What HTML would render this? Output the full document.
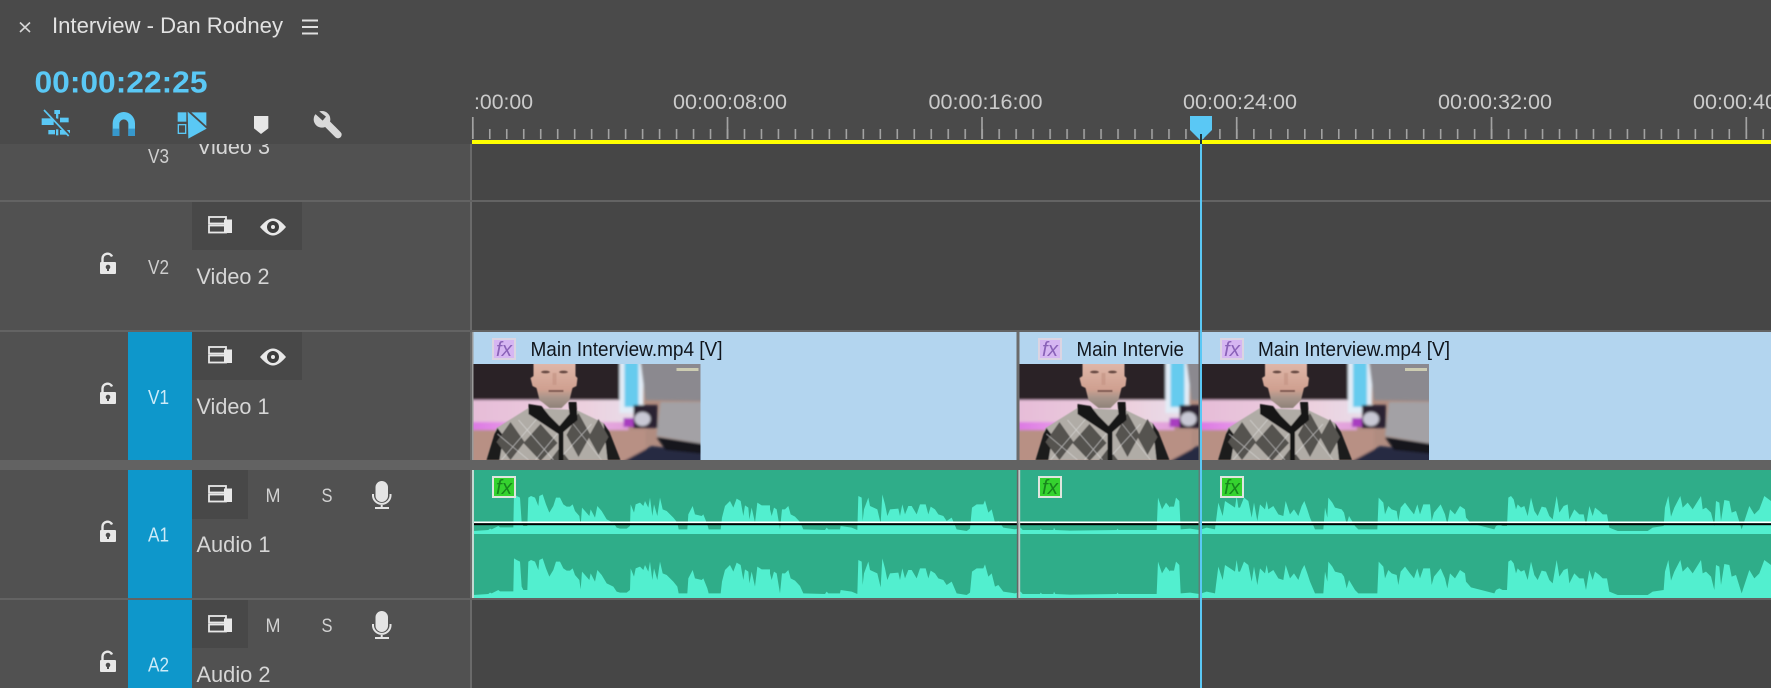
<!DOCTYPE html>
<html><head><meta charset="utf-8"><style>
html,body{margin:0;padding:0;background:#464646;overflow:hidden}
svg{display:block}
text{font-family:"Liberation Sans",sans-serif}
.t{font-size:22px;fill:#d6d6d6}
.r{font-size:21px;fill:#cbcbcb}
.c{font-size:20px;fill:#10151c}
.fxp{font-family:"Liberation Sans",sans-serif;font-style:italic;font-size:20px;fill:#8a62b8}
.fxg{font-family:"Liberation Sans",sans-serif;font-style:italic;font-size:20px;fill:#17851c}
</style></head><body>
<svg xmlns="http://www.w3.org/2000/svg" width="1771" height="688" viewBox="0 0 1771 688">
<defs>
<pattern id="tk" x="472" y="129" width="16.98" height="10" patternUnits="userSpaceOnUse"><rect x="0" y="0" width="1.6" height="10" fill="#a2a2a2"/></pattern>
<filter id="b1"><feGaussianBlur stdDeviation="1.2"/></filter>
<filter id="b2"><feGaussianBlur stdDeviation=".55"/></filter>
<filter id="b3"><feGaussianBlur stdDeviation="1.6"/></filter>
<clipPath id="c1"><rect x="0" y="0" width="227" height="96"/></clipPath>
<clipPath id="c2"><rect x="0" y="0" width="179" height="96"/></clipPath>
<linearGradient id="pink" x1="0" x2="1" y1="0" y2="0"><stop offset="0" stop-color="#e6bcd8"/><stop offset=".7" stop-color="#ecd0de"/><stop offset="1" stop-color="#e8dce8"/></linearGradient>
<linearGradient id="mag" x1="0" x2="1" y1="0" y2="0"><stop offset="0" stop-color="#dc78e2"/><stop offset=".5" stop-color="#f0b4ee"/><stop offset="1" stop-color="#e0a0d8"/></linearGradient>
<linearGradient id="skin" x1="0" x2="0" y1="0" y2="1"><stop offset="0" stop-color="#e0b8aa"/><stop offset=".6" stop-color="#cfa090"/><stop offset=".78" stop-color="#a8948a"/><stop offset="1" stop-color="#8e8278"/></linearGradient>

<g id="bg">
 <rect width="227" height="96" fill="#b08c80"/>
 <g filter="url(#b1)">
  <rect x="-3" y="-3" width="150" height="39" fill="#2c2428"/>
  <rect x="-3" y="36" width="163" height="26" fill="url(#pink)"/>
  <rect x="-3" y="58" width="158" height="8" fill="url(#mag)"/>
  <rect x="-3" y="66" width="175" height="33" fill="#b89084"/>
  <rect x="146" y="-3" width="24" height="52" fill="#e2ecf6"/>
  <rect x="151" y="-3" width="14" height="46" fill="#66cbee"/>
  <polygon points="167,-3 230,-3 230,37 172,36" fill="#8b898f"/>
  <polygon points="187,38 230,38 230,80 183,72" fill="#a3a1a5"/>
  <rect x="160" y="41" width="24" height="23" fill="#2b2430"/>
  <ellipse cx="169" cy="55" rx="8" ry="7" fill="#c8c8d4"/>
  <rect x="150" y="54" width="10" height="9" fill="#a83ec0"/>
  <polygon points="147,99 178,82 230,88 230,99" fill="#282a42"/>
  <polygon points="183,73 230,80 230,90 192,86" fill="#17171d"/>
 </g>
 <rect x="203" y="4" width="22" height="3" fill="#d8d8b8" opacity=".85"/>
</g>

<g id="man" filter="url(#b2)">
 <polygon points="13,96 23,64 55,44 103,46 130,59 147,96" fill="#b0aca6"/>
 <polygon points="13,96 21,70 24,64 30,72 26,96" fill="#1c1a1c"/>
 <polygon points="130,59 136,68 147,96 134,96" fill="#1b1a1c"/>
 <g fill="#55524f">
  <polygon points="37,58 51,78 37,96 23,78"/>
  <polygon points="67,60 84,79 67,97 50,79"/>
  <polygon points="105,49 117,71 105,93 93,71"/>
  <polygon points="125,55 135,73 125,91 115,73"/>
  <polygon points="86,84 96,97 76,97"/>
 </g>
 <g stroke="#e2e2e2" stroke-width=".6" fill="none" opacity=".75">
  <path d="M24,70L55,96M45,56L80,96M62,96L100,50M28,96L64,54M85,96L118,60M95,54L128,96"/>
 </g>
 <polygon points="55,40 68,42 76,52 86,62 96,50 95,38 103,38 104,56 90,68 90,97 85,97 85,70 70,60 55,50" fill="#151315"/>
 <path d="M60,-2 H102 V12 L104,14 L103,22 L99,24 L96,36 L88,44 L76,44 L66,36 L63,24 L59,22 L57,14 L60,12 Z" fill="url(#skin)"/>
 <ellipse cx="72" cy="8" rx="4.5" ry="1.5" fill="#6a4c44"/>
 <ellipse cx="90" cy="8" rx="4.5" ry="1.5" fill="#6a4c44"/>
 <rect x="79" y="9" width="4" height="12" fill="#c49484" opacity=".7"/>
 <rect x="75" y="26" width="15" height="2" fill="#7d5650"/>
</g>

<g id="wave" fill="#52efcf">
 <polygon transform="translate(470,510) scale(.33333)" points="10,264 10,255 55,252 60,248 65,250 85,240 90,244 130,244 132,145 140,150 150,155 155,230 160,240 172,240 175,155 183,150 195,155 205,180 208,150 218,145 228,175 238,200 250,180 258,155 270,155 280,175 290,182 300,182 308,175 315,195 328,210 332,238 336,185 345,195 358,210 362,190 375,215 382,180 395,195 410,220 430,230 440,245 450,248 470,248 480,240 482,175 492,200 497,175 510,170 520,180 525,165 535,185 540,155 547,210 552,175 562,210 570,155 578,190 590,195 610,215 622,230 626,250 652,250 655,205 668,180 675,205 695,210 700,205 712,235 716,250 752,250 756,215 765,180 780,165 790,185 800,158 812,165 820,210 825,178 835,185 838,220 845,185 855,230 862,170 875,178 900,178 900,264"/>
 <polygon transform="translate(770,510) scale(.33333)" points="0,264 0,190 5,210 12,185 20,190 30,250 36,190 45,190 55,180 62,205 75,212 90,228 100,250 165,252 170,245 175,250 210,250 212,240 245,245 262,252 265,150 275,155 278,225 282,190 295,155 300,180 322,190 332,232 337,145 345,175 352,210 360,190 385,188 390,210 397,175 405,205 415,180 425,180 440,205 450,175 467,175 475,205 482,182 495,190 505,205 520,210 530,225 545,215 560,250 590,255 600,248 606,185 620,175 640,175 645,163 655,200 665,190 675,230 685,225 700,245 735,250 752,245 758,252 810,252 812,248 816,252 850,252 852,245 856,252 900,254 900,264"/>
 <polygon transform="translate(1070,510) scale(.33333)" points="0,264 0,254 140,252 142,248 146,252 260,252 264,155 276,190 288,170 300,185 301,264"/>
 <polygon transform="translate(1170,510) scale(.33333)" points="0,264 0,182 12,182 18,155 28,165 32,250 60,248 88,252 110,245 135,250 138,225 145,170 158,210 165,165 185,178 195,185 200,150 205,185 210,185 222,155 235,165 245,215 252,170 262,225 270,175 285,190 290,165 295,190 310,180 325,205 340,210 347,165 360,205 372,190 385,210 395,180 403,165 412,190 420,215 435,250 460,250 465,185 472,215 475,155 487,170 495,185 515,190 522,200 530,235 537,210 555,240 565,250 622,250 626,155 640,170 645,205 655,180 665,190 680,195 685,225 692,185 705,170 720,190 732,205 742,175 750,205 760,175 780,175 785,225 792,200 812,175 825,205 832,235 840,190 855,205 870,180 885,190 888,215 903,232 903,264"/>
 <polygon transform="translate(1471,510) scale(.33333)" points="0,264 0,232 70,250 75,240 85,235 95,240 108,240 112,155 120,150 128,160 135,190 140,175 150,185 160,180 170,210 180,155 190,195 200,210 212,182 225,185 235,210 245,220 257,150 265,200 278,180 290,175 295,220 310,190 325,205 338,205 345,240 355,180 365,210 372,185 385,195 395,205 408,205 415,245 440,255 530,255 545,245 578,240 582,185 592,150 600,212 610,185 628,150 635,185 650,170 665,190 690,150 695,190 705,185 720,200 730,240 735,165 745,170 750,225 760,162 775,165 782,200 795,195 812,250 835,180 850,205 865,190 880,150 900,165 900,264"/>
</g>

<g id="lock" fill="#e8e8e8">
 <rect x="100" y="262" width="16" height="12" rx="1"/>
 <path d="M102.5,262 V258.5 A5,5 0 0 1 112,256.5" fill="none" stroke="#e8e8e8" stroke-width="2.4"/>
 <circle cx="108" cy="267" r="2.3" fill="#4c4c4c"/><rect x="107" y="267" width="2" height="4" fill="#4c4c4c"/>
</g>
<g id="out" fill="none" stroke="#e8e8e8" stroke-width="1.8">
 <rect x="209" y="217" width="17" height="6.5"/>
 <rect x="209" y="225.5" width="17" height="7"/>
 <rect x="224" y="219.5" width="8" height="13.5" fill="#e8e8e8" stroke="none"/>
</g>
<g id="eye">
 <path d="M260,227 C266,220 270,218.5 273,218.5 C276,218.5 280,220 286,227 C280,234 276,235.5 273,235.5 C270,235.5 266,234 260,227Z" fill="#e8e8e8"/>
 <circle cx="273" cy="227" r="6" fill="#3c3c3c"/>
 <circle cx="273" cy="227" r="2" fill="#e8e8e8"/>
</g>
<g id="mic">
 <rect x="375.5" y="481" width="12.5" height="21" rx="6.25" fill="#e4e4e4"/>
 <path d="M373,494 V496 A8.8,8.8 0 0 0 390.5,496 V494" fill="none" stroke="#e4e4e4" stroke-width="2"/>
 <path d="M381.7,505 V508 M375,508 H389" stroke="#e4e4e4" stroke-width="2" fill="none"/>
</g>
<g id="ms">
 <text x="265.5" y="502" font-size="19" fill="#d2d2d2" textLength="15" lengthAdjust="spacingAndGlyphs">M</text>
 <text x="321.5" y="502" font-size="19" fill="#d2d2d2" textLength="11" lengthAdjust="spacingAndGlyphs">S</text>
</g>
</defs>

<!-- base -->
<rect width="1771" height="688" fill="#464646"/>
<rect x="0" y="144" width="470" height="544" fill="#515151"/>
<text class="t" x="197" y="154" textLength="73" lengthAdjust="spacingAndGlyphs">Video 3</text>
<rect x="0" y="0" width="1771" height="144" fill="#4a4a4a"/>
<rect x="472" y="144" width="1299" height="544" fill="#464646"/>
<rect x="470" y="144" width="2" height="544" fill="#6a6a6a"/>

<!-- row lines -->
<rect x="0" y="200" width="1771" height="2" fill="#636363"/>
<rect x="0" y="330" width="1771" height="2" fill="#636363"/>
<rect x="0" y="460" width="1771" height="10" fill="#626262"/>
<rect x="0" y="598" width="1771" height="2" fill="#636363"/>

<!-- header -->
<path d="M20,22.5 L30,32 M30,22.5 L20,32" stroke="#d6d6d6" stroke-width="1.6"/>
<text x="52" y="33" font-size="22" fill="#e2e2e2" textLength="231" lengthAdjust="spacingAndGlyphs">Interview - Dan Rodney</text>
<path d="M302,20.5H318M302,27H318M302,33.5H318" stroke="#e0e0e0" stroke-width="2"/>
<text x="34.5" y="92.5" font-size="31" font-weight="bold" fill="#5ac8f5" textLength="173" lengthAdjust="spacingAndGlyphs">00:00:22:25</text>

<g transform="scale(.33333)">
 <!-- linked selection -->
 <g fill="#5ac8f5">
  <rect x="163" y="330" width="17" height="12"/><rect x="168" y="340" width="7" height="16"/>
  <rect x="125" y="355" width="36" height="20"/><rect x="180" y="353" width="26" height="14"/>
  <rect x="145" y="390" width="20" height="13"/><rect x="180" y="390" width="30" height="14"/>
  <rect x="168" y="388" width="7" height="18"/>
 </g>
 <path d="M136,326 L210,408" stroke="#4a4a4a" stroke-width="10"/>
 <path d="M132,330 L206,408" stroke="#5ac8f5" stroke-width="5"/>
 <!-- magnet -->
 <path d="M338,408 V370 A33.5,34 0 0 1 405,370 V408 H385 V372 A13.5,14 0 0 0 358,372 V408 Z" fill="#5ac8f5"/>
 <path d="M338,386 H358 V408 H338Z M385,386 H405 V408 H385Z" fill="#3798cc"/>
 <!-- insert overwrite -->
 <rect x="533" y="337" width="26" height="28" fill="#5ac8f5"/>
 <rect x="535" y="374" width="22" height="26" fill="none" stroke="#5ac8f5" stroke-width="4"/>
 <polygon points="563,335 620,386 565,416" fill="#5ac8f5"/>
 <polygon points="574,337 619,337 619,378" fill="#5ac8f5"/>
 <!-- marker -->
 <polygon points="762,348 805,348 805,385 783,402 762,385" fill="#e6e6e6"/>
 <!-- wrench -->
 <path d="M978,368 L1014,404" stroke="#d9d9d9" stroke-width="22" stroke-linecap="round"/>
 <circle cx="966" cy="358" r="25" fill="#d9d9d9"/>
 <polygon points="950,328 978,350 968,362 944,340 945,328" fill="#4a4a4a"/>
</g>

<!-- ruler -->
<rect x="472" y="129" width="1299" height="10" fill="url(#tk)"/>
<path d="M472.8,117V139M727.5,117V139M982,117V139M1236.7,117V139M1491.5,117V139M1746.3,117V139" stroke="#a2a2a2" stroke-width="1.7"/>
<text class="r" x="474" y="109" textLength="59" lengthAdjust="spacingAndGlyphs">:00:00</text>
<text class="r" x="673" y="109" textLength="114" lengthAdjust="spacingAndGlyphs">00:00:08:00</text>
<text class="r" x="928.5" y="109" textLength="114" lengthAdjust="spacingAndGlyphs">00:00:16:00</text>
<text class="r" x="1183" y="109" textLength="114" lengthAdjust="spacingAndGlyphs">00:00:24:00</text>
<text class="r" x="1438" y="109" textLength="114" lengthAdjust="spacingAndGlyphs">00:00:32:00</text>
<text class="r" x="1693" y="109" textLength="114" lengthAdjust="spacingAndGlyphs">00:00:40:00</text>
<rect x="472" y="140" width="1299" height="4" fill="#ffff00"/>

<!-- track targets -->
<rect x="128" y="332" width="64" height="128" fill="#0e97cb"/>
<rect x="128" y="470" width="64" height="128" fill="#0e97cb"/>
<rect x="128" y="600" width="64" height="88" fill="#0e97cb"/>
<!-- icon panels -->
<rect x="192" y="202" width="110" height="48" fill="#484848"/>
<rect x="192" y="332" width="110" height="48" fill="#484848"/>
<rect x="192" y="470" width="56" height="49" fill="#484848"/>
<rect x="192" y="600" width="56" height="48" fill="#484848"/>

<!-- labels -->
<text x="148" y="163" font-size="20" fill="#cfcfcf" textLength="21" lengthAdjust="spacingAndGlyphs">V3</text>
<text x="148" y="274" font-size="20" fill="#cfcfcf" textLength="21" lengthAdjust="spacingAndGlyphs">V2</text>
<text x="148" y="404" font-size="20" fill="#cdebf8" textLength="21" lengthAdjust="spacingAndGlyphs">V1</text>
<text x="148" y="541.5" font-size="20" fill="#cdebf8" textLength="21" lengthAdjust="spacingAndGlyphs">A1</text>
<text x="148" y="671.5" font-size="20" fill="#cdebf8" textLength="21" lengthAdjust="spacingAndGlyphs">A2</text>
<text class="t" x="196.5" y="284" textLength="73" lengthAdjust="spacingAndGlyphs">Video 2</text>
<text class="t" x="196.5" y="414" textLength="73" lengthAdjust="spacingAndGlyphs">Video 1</text>
<text class="t" x="196.5" y="552" textLength="74" lengthAdjust="spacingAndGlyphs">Audio 1</text>
<text class="t" x="196.5" y="682" textLength="74" lengthAdjust="spacingAndGlyphs">Audio 2</text>

<!-- icons -->
<use href="#lock"/><use href="#lock" y="130"/><use href="#lock" y="268"/><use href="#lock" y="398"/>
<use href="#out"/><use href="#out" y="130"/><use href="#out" y="269"/><use href="#out" y="399"/>
<use href="#eye"/><use href="#eye" y="130"/>
<use href="#ms"/><use href="#ms" y="130"/>
<use href="#mic"/><use href="#mic" y="130"/>

<!-- video clips -->
<rect x="472" y="332" width="2" height="128" fill="#9a9a9a"/>
<rect x="473.5" y="332" width="543" height="128" fill="#b3d5ef"/>
<rect x="1016.5" y="332" width="3" height="128" fill="#6b6b6b"/>
<rect x="1019.5" y="332" width="179" height="128" fill="#b3d5ef"/>
<rect x="1198.5" y="332" width="3.5" height="128" fill="#606060"/>
<rect x="1202" y="332" width="569" height="128" fill="#b3d5ef"/>

<g transform="translate(473.5,364)" clip-path="url(#c1)"><use href="#bg"/><use href="#man"/></g>
<g transform="translate(1019.5,364)" clip-path="url(#c2)"><use href="#bg"/><use href="#man" x="3"/></g>
<g transform="translate(1202,364)" clip-path="url(#c1)"><use href="#bg"/><use href="#man" x="3"/></g>

<g>
 <rect x="493" y="339" width="22" height="20" fill="#d6b6f2" stroke="#dbd4e2" stroke-width="2"/>
 <rect x="1039" y="339" width="22" height="20" fill="#d6b6f2" stroke="#dbd4e2" stroke-width="2"/>
 <rect x="1221" y="339" width="22" height="20" fill="#d6b6f2" stroke="#dbd4e2" stroke-width="2"/>
 <text class="fxp" x="496" y="356" textLength="16" lengthAdjust="spacingAndGlyphs">fx</text>
 <text class="fxp" x="1042" y="356" textLength="16" lengthAdjust="spacingAndGlyphs">fx</text>
 <text class="fxp" x="1224" y="356" textLength="16" lengthAdjust="spacingAndGlyphs">fx</text>
</g>
<text class="c" x="530.5" y="356" textLength="192" lengthAdjust="spacingAndGlyphs">Main Interview.mp4 [V]</text>
<text class="c" x="1076.5" y="356" textLength="107.5" lengthAdjust="spacingAndGlyphs">Main Intervie</text>
<text class="c" x="1258" y="356" textLength="192" lengthAdjust="spacingAndGlyphs">Main Interview.mp4 [V]</text>

<!-- audio clips -->
<rect x="473" y="470" width="1298" height="128" fill="#2fad89"/>
<use href="#wave"/>
<use href="#wave" y="-64"/>
<rect x="473" y="521.5" width="1298" height="1.7" fill="#ffffff"/>
<rect x="473" y="523.2" width="1298" height="2" fill="#000000"/>
<rect x="472" y="470" width="2" height="128" fill="#c4d8d2"/>
<rect x="1016.8" y="470" width="1.6" height="128" fill="#666666"/>
<rect x="1018.4" y="470" width="1.8" height="128" fill="#c2c8c6"/>
<rect x="1198.5" y="470" width="1.5" height="128" fill="#5d7f78"/>
<rect x="493" y="477" width="22" height="20" fill="#35d22f" stroke="#dfe6df" stroke-width="2"/>
<rect x="1039" y="477" width="22" height="20" fill="#35d22f" stroke="#dfe6df" stroke-width="2"/>
<rect x="1221" y="477" width="22" height="20" fill="#35d22f" stroke="#dfe6df" stroke-width="2"/>
<text class="fxg" x="496" y="494" textLength="16" lengthAdjust="spacingAndGlyphs">fx</text>
<text class="fxg" x="1042" y="494" textLength="16" lengthAdjust="spacingAndGlyphs">fx</text>
<text class="fxg" x="1224" y="494" textLength="16" lengthAdjust="spacingAndGlyphs">fx</text>

<!-- playhead -->
<rect x="1200" y="140" width="2" height="548" fill="#5ac8f5"/>
<polygon points="1190,116 1212,116 1212,130 1201,141 1190,130" fill="#5ac8f5"/>
<rect x="1200.2" y="134" width="1.6" height="10" fill="#111"/>
</svg>
</body></html>
